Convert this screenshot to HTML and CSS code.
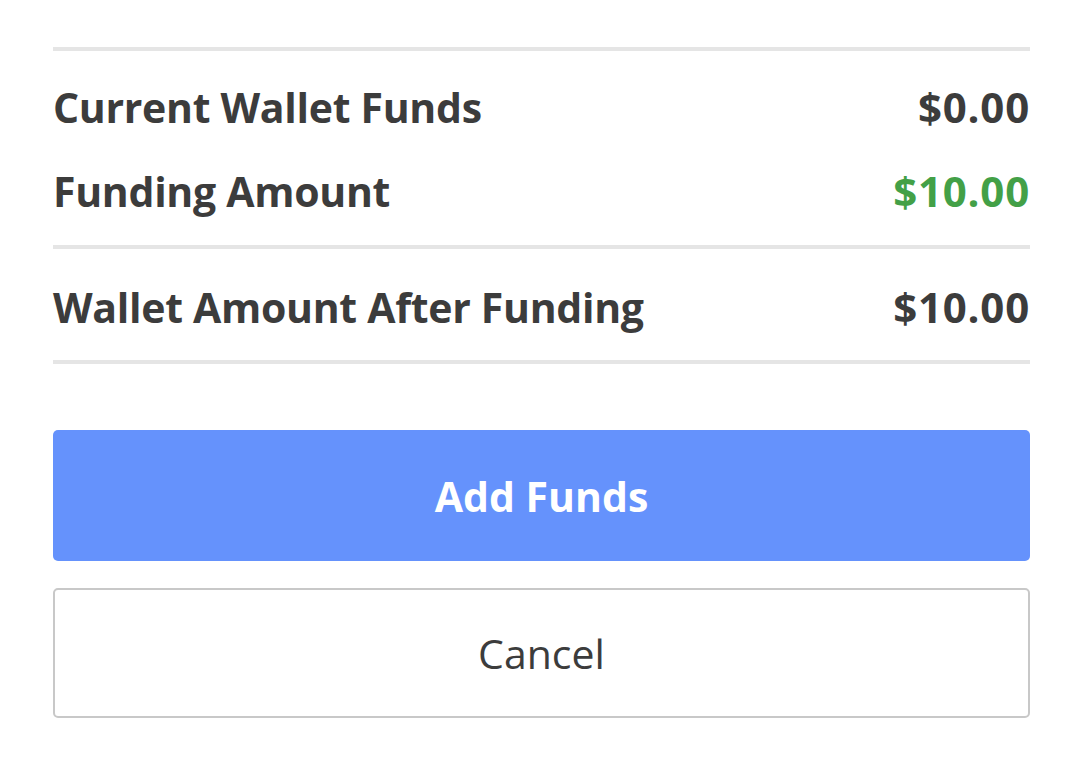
FILE: index.html
```html
<!DOCTYPE html>
<html lang="en">
<head>
    <meta charset="UTF-8">
    <meta name="viewport" content="width=device-width, initial-scale=1.0">
    <title>Add Funds</title>
    <link rel="stylesheet" href="styles.css">
</head>
<body>

    <div class="wallet">
        <div class="summary">
            <div class="row">
                <span>Current Wallet Funds</span>
                <span class="amount">$0.00</span>
            </div>
            <div class="row">
                <span>Funding Amount</span>
                <span class="amount amount-green">$10.00</span>
            </div>
        </div>

        <div class="summary total">
            <div class="row">
                <span>Wallet Amount After Funding</span>
                <span class="amount">$10.00</span>
            </div>
        </div>

        <div class="actions">
            <button class="btn btn-primary">Add Funds</button>
            <button class="btn btn-secondary">Cancel</button>
        </div>
    </div>

</body>
</html>
```

FILE: styles.css
```css
body {
    font-family: 'Open Sans', 'Noto Sans', sans-serif;
    margin: 0;
    padding: 0;
    background-color: #fff;
    color: #3c3c3c;
}

.wallet {
    width: 977px;
    margin-left: 53px;
    padding-top: 47px;
}

.summary {
    border-top: 4px solid #e5e5e5;
    padding: 14px 0 12px;
}

.summary.total {
    padding: 16px 0 11px;
    border-bottom: 4px solid #e5e5e5;
}

.row {
    display: flex;
    justify-content: space-between;
    align-items: baseline;
    font-size: 41px;
    font-weight: 700;
    line-height: 84px;
    letter-spacing: -0.3px;
}

.amount {
    font-size: 42px;
    letter-spacing: 0.8px;
}

.amount-green {
    color: #43a047;
}

.actions {
    display: flex;
    flex-direction: column;
    gap: 27px;
    margin-top: 66px;
}

.btn {
    font-family: 'Open Sans', 'Noto Sans', sans-serif;
    width: 100%;
    border-radius: 5px;
    cursor: pointer;
}

.btn-primary {
    height: 131px;
    background-color: #6592fc;
    border: none;
    color: #fff;
    font-size: 41px;
    font-weight: 700;
}

.btn-secondary {
    height: 130px;
    background-color: #fff;
    border: 2px solid #c8c8c8;
    color: #3c3c3c;
    font-size: 41px;
    font-weight: 400;
}
```
